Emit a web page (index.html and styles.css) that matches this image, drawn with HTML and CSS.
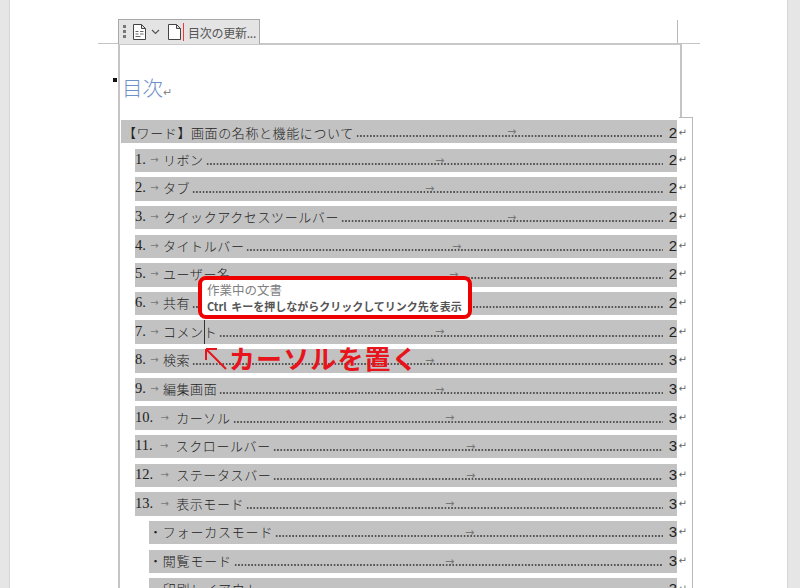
FILE: index.html
```html
<!DOCTYPE html>
<html lang="ja">
<head>
<meta charset="utf-8">
<title>目次</title>
<link rel="stylesheet" href="styles.css">
</head>
<body>
<div class="screen">
  <div class="canvas">
    <div class="mark h-top-left"></div>
    <div class="mark h-top-right"></div>
    <div class="mark v-top-right"></div>
    <div class="toolbar">
      <svg class="grip" width="6" height="16" viewBox="0 0 6 16"><rect x="1" y="1" width="3" height="3" fill="#777"/><rect x="1" y="6" width="3" height="3" fill="#777"/><rect x="1" y="11" width="3" height="3" fill="#777"/></svg>
      <svg class="doc" width="15" height="18" viewBox="0 0 15 18"><path d="M1.500 1.500h8l4 4v11h-12z M9.500 1.500v4h4" fill="#fff" stroke="#444"/><path d="M3.500 8.500h3M8 8.500h3.500M3.500 11h3M8 11h3.500M3.500 13.500h5" stroke="#666"/></svg>
      <svg class="chev" width="9" height="6" viewBox="0 0 9 6"><path d="M1 1l3.500 3.500L8 1" fill="none" stroke="#555" stroke-width="1.200"/></svg>
      <span class="doc2">
        <svg width="15" height="18" viewBox="0 0 15 18"><path d="M1.500 1.500h8l4 4v11h-12z M9.500 1.500v4h4" fill="#fff" stroke="#444"/></svg>
        <i class="redbar"></i>
      </span>
      <span class="update">目次の更新...</span>
    </div>
    <div class="page">
      <span class="anchor"></span>
      <div class="title">目次<span class="ret">↵</span></div>
      <div class="toc">
        <div class="row l0"><span class="t">【ワード】画面の名称と機能について</span><span class="dots"></span><span class="tab tab-510"></span><span class="pg">2</span><span class="ret">↵</span></div>
        <div class="row l1"><span class="n">1.</span><span class="ar">→</span><span class="t">リボン</span><span class="dots"></span><span class="tab tab-438"></span><span class="pg">2</span><span class="ret">↵</span></div>
        <div class="row l1"><span class="n">2.</span><span class="ar">→</span><span class="t">タブ</span><span class="dots"></span><span class="tab tab-428"></span><span class="pg">2</span><span class="ret">↵</span></div>
        <div class="row l1"><span class="n">3.</span><span class="ar">→</span><span class="t">クイックアクセスツールバー</span><span class="dots"></span><span class="tab tab-510"></span><span class="pg">2</span><span class="ret">↵</span></div>
        <div class="row l1"><span class="n">4.</span><span class="ar">→</span><span class="t">タイトルバー</span><span class="dots"></span><span class="tab tab-455"></span><span class="pg">2</span><span class="ret">↵</span></div>
        <div class="row l1"><span class="n">5.</span><span class="ar">→</span><span class="t">ユーザー名</span><span class="dots"></span><span class="tab tab-452"></span><span class="pg">2</span><span class="ret">↵</span></div>
        <div class="row l1"><span class="n">6.</span><span class="ar">→</span><span class="t">共有</span><span class="dots"></span><span class="tab tab-428"></span><span class="pg">2</span><span class="ret">↵</span></div>
        <div class="row l1"><span class="n">7.</span><span class="ar">→</span><span class="t">コメン<i class="caret"></i>ト</span><span class="dots"></span><span class="tab tab-438"></span><span class="pg">2</span><span class="ret">↵</span></div>
        <div class="row l1"><span class="n">8.</span><span class="ar">→</span><span class="t">検索</span><span class="dots"></span><span class="tab tab-428"></span><span class="pg">3</span><span class="ret">↵</span></div>
        <div class="row l1"><span class="n">9.</span><span class="ar">→</span><span class="t">編集画面</span><span class="dots"></span><span class="tab tab-438"></span><span class="pg">3</span><span class="ret">↵</span></div>
        <div class="row l1"><span class="n">10.</span><span class="ar w">→</span><span class="t">カーソル</span><span class="dots"></span><span class="tab tab-448"></span><span class="pg">3</span><span class="ret">↵</span></div>
        <div class="row l1"><span class="n">11.</span><span class="ar w">→</span><span class="t">スクロールバー</span><span class="dots"></span><span class="tab tab-468"></span><span class="pg">3</span><span class="ret">↵</span></div>
        <div class="row l1"><span class="n">12.</span><span class="ar w">→</span><span class="t">ステータスバー</span><span class="dots"></span><span class="tab tab-468"></span><span class="pg">3</span><span class="ret">↵</span></div>
        <div class="row l1"><span class="n">13.</span><span class="ar w">→</span><span class="t">表示モード</span><span class="dots"></span><span class="tab tab-448"></span><span class="pg">3</span><span class="ret">↵</span></div>
        <div class="row l2"><span class="t">・フォーカスモード</span><span class="dots"></span><span class="tab tab-468"></span><span class="pg">3</span><span class="ret">↵</span></div>
        <div class="row l2"><span class="t">・閲覧モード</span><span class="dots"></span><span class="tab tab-448"></span><span class="pg">3</span><span class="ret">↵</span></div>
        <div class="row l2"><span class="t">・印刷レイアウト</span><span class="dots"></span><span class="pg">3</span><span class="ret">↵</span></div>
      </div>
    </div>
    <div class="tip">
      <div class="tip-1">作業中の文書</div>
      <div class="tip-2">Ctrl キーを押しながらクリックしてリンク先を表示</div>
    </div>
    <div class="note">
      <svg width="24" height="24" viewBox="0 0 24 24"><path d="M3 3L23 23M3 3h11M3 3v11" fill="none" stroke="#e8141c" stroke-width="2"/></svg>
      <span>カーソルを置く</span>
    </div>
  </div>
</div>
</body>
</html>
```
FILE: styles.css
```css
* { box-sizing: border-box; }
html, body { margin: 0; padding: 0; height: 100%; overflow: hidden; }
.screen { width: 800px; height: 588px; background: #e6e6e6; display: flex; overflow: hidden; }
.canvas { position: relative; width: 777px; height: 588px; margin-left: 10px; background: #fff; flex: none; box-shadow: -1px 0 #d6d6d6, 1px 0 #d6d6d6; }
.mark { position: absolute; background: #c4c4c4; }
.h-top-left { left: 88px; top: 43px; width: 20px; height: 1px; }
.h-top-right { left: 670px; top: 43px; width: 20px; height: 1px; }
.v-top-right { left: 667px; top: 20px; width: 1px; height: 24px; background: #b8b8b8; }
.toolbar { position: absolute; left: 108px; top: 19px; height: 25px; width: 142px; background: #e4e4e4; border: 1px solid #a8a8a8; border-bottom: 0; display: flex; align-items: center; padding-left: 3px; z-index: 2; }
.grip { margin-right: 4px; }
.doc { margin-right: 4px; }
.chev { margin-right: 7px; }
.doc2 { position: relative; display: flex; width: 16px; margin-right: 5px; }
.redbar { position: absolute; left: 16px; top: 0; width: 1px; height: 18px; background: #f33; }
.update { font: 12px "Noto Sans CJK JP", sans-serif; color: #555; white-space: nowrap; letter-spacing: -.25px; }
.page { position: absolute; left: 108px; top: 43px; width: 563px; height: 560px; border-top: 2px solid #c8c8c8; border-left: 2px solid #c4c4c4; padding: 29px 0 0 1px; }
.page::before { content: ""; position: absolute; right: -1px; top: -2px; width: 2px; height: 74px; background: #c4c4c4; }
.page::after { content: ""; position: absolute; right: -12px; top: 72px; width: 13px; height: 500px; border-top: 1px solid #b8b8b8; border-right: 1px solid #b8b8b8; }
.anchor { position: absolute; left: -7px; top: 33px; width: 4px; height: 4px; background: #111; }
.title { font: 300 20.5px/27px "Noto Sans CJK JP", sans-serif; color: #7090c8; height: 46px; margin-left: 1px; }
.title .ret { font-size: 11px; color: #888; }
.toc { width: 556px; display: flex; flex-direction: column; gap: 5.25px; }
.row { height: 23.4px; background: #c2c2c2; display: flex; align-items: center; font: 300 13px "Noto Sans CJK JP", serif; color: #222; position: relative; white-space: nowrap; }
.row .ret { position: absolute; right: -10px; font: 10px "DejaVu Sans", sans-serif; color: #666; }
.l0 { padding-left: 2px; padding-top: 1px; }
.l1 { margin-left: 14px; padding-bottom: 2px; }
.l2 { margin-left: 28px; padding-bottom: 2px; }
.n { font: 14.5px "Liberation Serif", serif; }
.ar { font: 10px "DejaVu Sans", sans-serif; color: #777; width: 17px; text-align: center; }
.ar.w { width: 23px; }
.t { letter-spacing: .6px; }
.l2 .t { letter-spacing: .8px; }
.caret { position: absolute; top: 0; bottom: 0; width: 1px; background: #333; }
.dots { flex: 1; height: 2px; margin: 8px 6px 0 2px; background-image: radial-gradient(circle, #555 .7px, transparent 1px); background-size: 3.3px 2px; }
.l1 .dots, .l2 .dots { margin-top: 9px; }
.pg { font: 15px "Liberation Sans", sans-serif; }
.tab { position: absolute; top: 9px; width: 11px; height: 6px; font: 11px/6px "DejaVu Sans", sans-serif; color: #777; }
.tab::after { content: "→"; }
.l1 .tab-428 { left: 290px; }
.l1 .tab-438 { left: 300px; }
.l1 .tab-448 { left: 310px; }
.l1 .tab-452 { left: 314px; }
.l1 .tab-455 { left: 317px; }
.l1 .tab-468 { left: 331px; }
.l1 .tab-510 { left: 372px; }
.l0 .tab-510 { left: 386px; }
.l2 .tab-468 { left: 316px; }
.l2 .tab-448 { left: 296px; }
.tip { position: absolute; left: 188px; top: 276px; width: 274px; height: 43px; background: #fff; border: 4px solid #ee0000; border-radius: 8px; padding: 2px 0 0 5px; z-index: 3; font: 11px/16px "Noto Sans CJK JP", sans-serif; white-space: nowrap; }
.tip-1 { color: #808080; font-size: 12.5px; }
.tip-2 { color: #555; font-weight: 700; letter-spacing: 0; word-spacing: 2px; line-height: 17px; }
.note { position: absolute; left: 193px; top: 343px; display: flex; align-items: center; gap: 2px; color: #e8141c; font: 700 26px/30px "Noto Sans CJK JP", sans-serif; letter-spacing: 1.1px; z-index: 3; white-space: nowrap; }
```
